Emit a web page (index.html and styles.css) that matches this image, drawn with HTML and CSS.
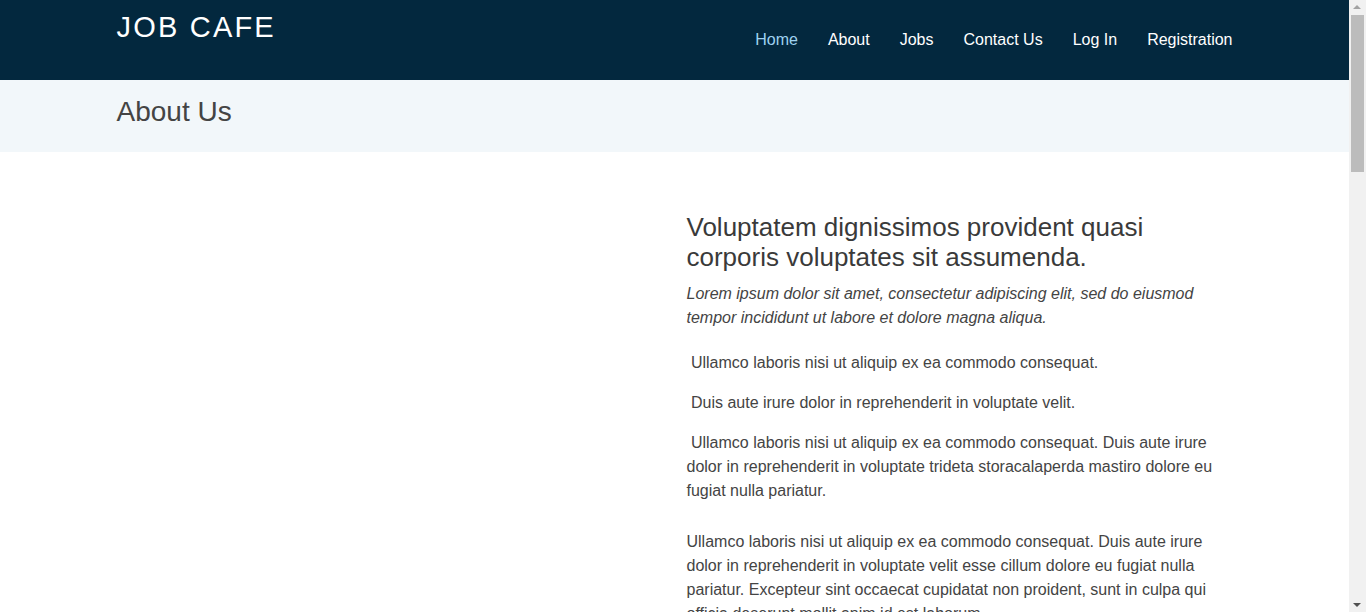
FILE: index.html
```html
<!DOCTYPE html>
<html lang="en">
<head>
<meta charset="utf-8">
<title>Job Cafe - About Us</title>
<link rel="stylesheet" href="styles.css">
</head>
<body>
<header class="site-header">
  <div class="container header-row">
    <a class="logo" href="#">JOB CAFE</a>
    <nav class="nav">
      <a class="nav-link active" href="#">Home</a>
      <a class="nav-link" href="#">About</a>
      <a class="nav-link" href="#">Jobs</a>
      <a class="nav-link" href="#">Contact Us</a>
      <a class="nav-link" href="#">Log In</a>
      <a class="nav-link" href="#">Registration</a>
    </nav>
  </div>
</header>
<section class="breadcrumbs">
  <div class="container">
    <h2 class="page-title">About Us</h2>
  </div>
</section>
<main class="about">
  <div class="container about-row">
    <div class="col"></div>
    <div class="col content">
      <h3 class="heading">Voluptatem dignissimos provident quasi corporis voluptates sit assumenda.</h3>
      <p class="lead">Lorem ipsum dolor sit amet, consectetur adipiscing elit, sed do eiusmod tempor incididunt ut labore et dolore magna aliqua.</p>
      <ul class="points">
        <li>&nbsp;Ullamco laboris nisi ut aliquip ex ea commodo consequat.</li>
        <li>&nbsp;Duis aute irure dolor in reprehenderit in voluptate velit.</li>
        <li>&nbsp;Ullamco laboris nisi ut aliquip ex ea commodo consequat. Duis aute irure dolor in reprehenderit in voluptate trideta storacalaperda mastiro dolore eu fugiat nulla pariatur.</li>
      </ul>
      <p class="body">Ullamco laboris nisi ut aliquip ex ea commodo consequat. Duis aute irure dolor in reprehenderit in voluptate velit esse cillum dolore eu fugiat nulla pariatur. Excepteur sint occaecat cupidatat non proident, sunt in culpa qui officia deserunt mollit anim id est laborum</p>
    </div>
  </div>
</main>
<section class="filler"></section>
<div class="scrollbar" aria-hidden="true">
  <span class="arrow up"></span>
  <span class="thumb"></span>
  <span class="arrow down"></span>
</div>
</body>
</html>
```

FILE: styles.css
```css
* { box-sizing: border-box; }
html, body { margin: 0; padding: 0; }
body {
  font-family: "Liberation Sans", Arial, sans-serif;
  color: #444444;
  font-size: 16px;
  line-height: 24px;
  background: #ffffff;
  padding-right: 17px;
}
.container {
  width: 1140px;
  margin: 0 auto;
  padding: 0 12px;
}
.site-header {
  background: #03283e;
  height: 80px;
}
.header-row {
  display: flex;
  justify-content: space-between;
  align-items: flex-start;
  height: 80px;
}
.logo {
  color: #ffffff;
  text-decoration: none;
  font-size: 29px;
  letter-spacing: 2.2px;
  line-height: 34px;
  margin-top: 10px;
}
.nav {
  display: flex;
  gap: 30px;
  margin-top: 28px;
}
.nav-link {
  color: #ffffff;
  text-decoration: none;
  font-size: 16px;
  line-height: 24px;
}
.nav-link.active { color: #9fd2f0; }
.breadcrumbs {
  background: #f2f7fa;
  height: 72px;
}
.page-title {
  margin: 0;
  padding-top: 15px;
  font-size: 28px;
  line-height: 34px;
  font-weight: 400;
  color: #444444;
}
.about { padding-top: 60px; }
.about-row { display: flex; }
.col { width: 50%; }
.content { padding-left: 12px; }
.heading {
  margin: 0 0 10px;
  font-size: 26px;
  line-height: 30px;
  font-weight: 400;
  color: #3a3a3a;
}
.lead {
  margin: 0 0 21px;
  font-style: italic;
}
.points {
  list-style: none;
  margin: 0;
  padding: 0;
}
.points li { padding-bottom: 16px; }
.body { margin: 11px 0 16px; }
.filler { height: 1200px; }

.scrollbar {
  position: fixed;
  top: 0;
  right: 0;
  width: 17px;
  height: 100vh;
  background: #f1f1f1;
}
.thumb {
  position: absolute;
  top: 15px;
  left: 2px;
  width: 13px;
  height: 157px;
  background: #bcbcbc;
}
.arrow {
  position: absolute;
  left: 4px;
  width: 0;
  height: 0;
  border-left: 4px solid transparent;
  border-right: 4px solid transparent;
}
.arrow.up {
  top: 5px;
  border-bottom: 4px solid #a3a3a3;
}
.arrow.down {
  bottom: 5px;
  border-top: 4px solid #505050;
}
```
